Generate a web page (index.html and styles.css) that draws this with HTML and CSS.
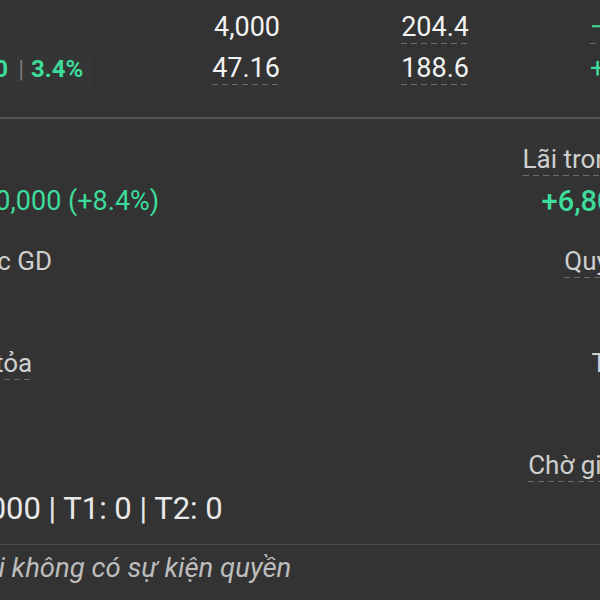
FILE: index.html
```html
<!DOCTYPE html>
<html lang="vi">
<head>
<meta charset="utf-8">
<title>Chi tiết danh mục</title>
<link rel="stylesheet" href="styles.css">
</head>
<body>
<div class="page">
  <div class="table">
    <div class="cell lead">VNM</div>
    <div class="cell num">4,000</div>
    <div class="cell num"><span class="dash">204.4</span></div>
    <div class="cell num down"><span class="dash">−15.8</span></div>

    <div class="cell lead"><span class="badge"><span class="chg">+16.20</span><span class="bar">|</span><span class="pct">3.4%</span></span></div>
    <div class="cell num"><span class="dash">47.16</span></div>
    <div class="cell num"><span class="dash">188.6</span></div>
    <div class="cell num up">+15.4</div>
  </div>

  <div class="rule"></div>

  <div class="stats">
    <div class="stat">
      <div class="label"><span class="dash">Lãi/lỗ</span></div>
      <div class="value up">+15,600,000 (+8.4%)</div>
    </div>
    <div class="stat right">
      <div class="label"><span class="dash">Lãi trong ngày</span></div>
      <div class="value up strong">+6,800,000</div>
    </div>

    <div class="stat">
      <div class="label">KL được GD</div>
      <div class="value">4,000</div>
    </div>
    <div class="stat right">
      <div class="label"><span class="dash">Quyền chờ</span></div>
      <div class="value">0</div>
    </div>

    <div class="stat">
      <div class="label"><span class="dash">Phong tỏa</span></div>
      <div class="value">0</div>
    </div>
    <div class="stat right">
      <div class="label">Tạm giữ</div>
      <div class="value">0</div>
    </div>

    <div class="stat"></div>
    <div class="stat right">
      <div class="label"><span class="dash">Chờ giao dịch</span></div>
    </div>
  </div>

  <div class="settle">T0: 4,000 | T1: 0 | T2: 0</div>

  <div class="thin"></div>

  <div class="note">Hiện tại không có sự kiện quyền</div>
</div>
</body>
</html>
```

FILE: styles.css
```css
html, body {
  margin: 0;
  padding: 0;
  background: #333333;
  overflow: hidden;
  height: 600px;
}

body {
  font-family: Roboto, "Noto Sans", sans-serif;
  color: #f2f2f2;
}

.page {
  width: 772px;
  margin-left: -86px;
}

.table {
  display: grid;
  grid-template-columns: 200px 166px 189px 189px;
  grid-auto-rows: 41px;
  padding-top: 11px;
}

.cell {
  font-size: 27px;
  line-height: 32px;
  white-space: nowrap;
}

.cell.num {
  text-align: right;
}

.lead {
  padding-left: 9px;
  color: #333333;
}

.dash {
  display: inline-block;
  padding-bottom: 1px;
  background-image: linear-gradient(to right, #6e6e6e 0 6px, transparent 6px 10px);
  background-size: 10px 1px;
  background-repeat: repeat-x;
  background-position: left bottom;
}

.up { color: #3ddc9a; }
.down { color: #3ddc9a; }

.badge {
  display: inline-flex;
  align-items: center;
  height: 42px;
  margin-top: -4px;
  padding: 0 10px;
  border-radius: 6px;
  background: rgba(61, 220, 154, 0.018);
  font-size: 24px;
  font-weight: 700;
  color: #3ddc9a;
}

.bar {
  margin: 0 7px 0 10px;
  font-weight: 400;
  color: #7a7a7a;
}

.rule {
  margin-top: 24px;
  height: 2px;
  background: #545454;
}

.stats {
  display: grid;
  grid-template-columns: 386px 386px;
  row-gap: 28px;
  padding-top: 24px;
}

.stat {
  display: flex;
  flex-direction: column;
  gap: 10px;
  white-space: nowrap;
}

.stat.right {
  align-items: flex-end;
  text-align: right;
}

.label {
  font-size: 26px;
  line-height: 32px;
  height: 32px;
  color: #cfcfcf;
}

.label .dash {
  padding-bottom: 0;
  height: 33px;
}

.value {
  font-size: 27px;
  line-height: 32px;
  color: #f2f2f2;
}

.value.up {
  color: #3ddc9a;
}

.value.strong {
  font-size: 29px;
  font-weight: 500;
}

.settle {
  margin-top: 10px;
  font-size: 31px;
  line-height: 36px;
  color: #e8e8e8;
  white-space: nowrap;
}

.thin {
  margin-top: 17px;
  height: 1px;
  background: #4a4a4a;
}

.note {
  padding-top: 7px;
  font-size: 27.5px;
  line-height: 32px;
  font-style: italic;
  color: #bdbdbd;
  white-space: nowrap;
}
```
